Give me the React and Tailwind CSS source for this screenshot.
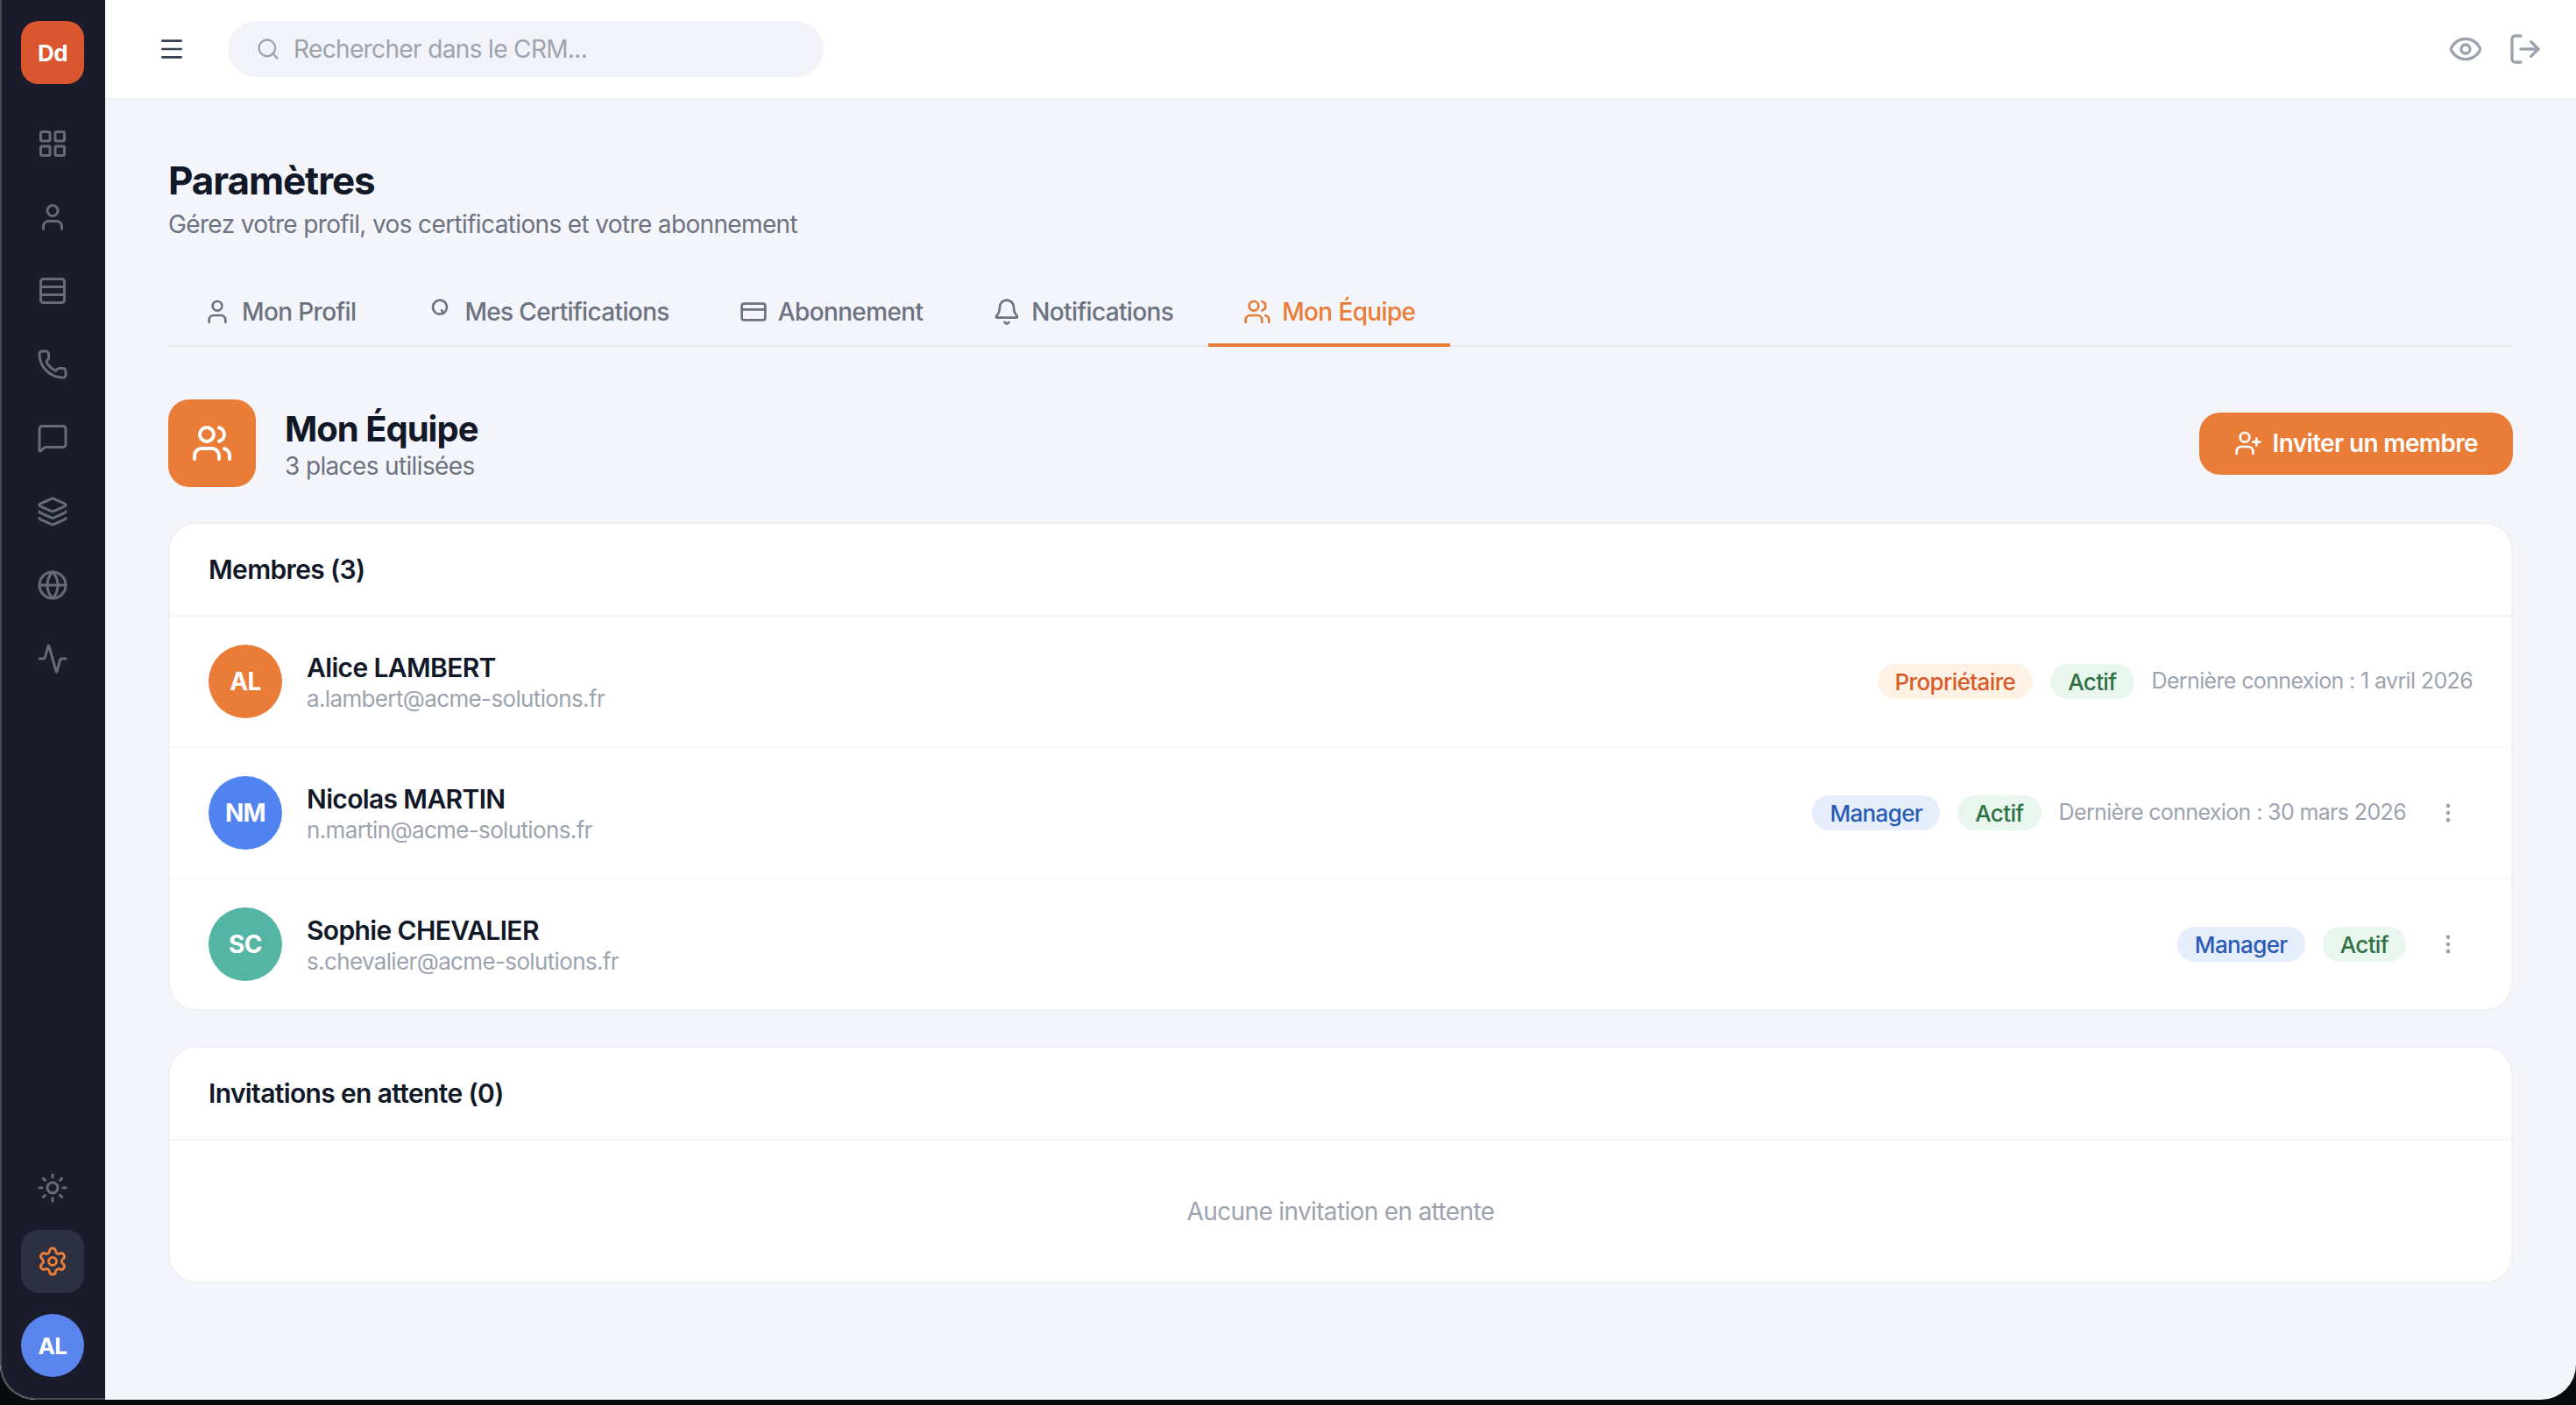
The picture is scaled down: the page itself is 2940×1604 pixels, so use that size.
import { Activity, Bell, CreditCard, Eye, Globe, Layers, LayoutGrid, LogOut, Menu, MessageSquare, MoreVertical, Phone, Rows3, Search, Settings, Sun, User, UserPlus, Users } from "lucide-react"

const navIcons = [LayoutGrid, User, Rows3, Phone, MessageSquare, Layers, Globe, Activity]

const AwardRing = ({ size }) => (
    <svg width={size} height={size} viewBox="0 0 24 24" fill="none" stroke="currentColor" strokeWidth="2" strokeLinecap="round" strokeLinejoin="round">
        <circle cx="12" cy="8" r="6" />
        <path d="M15 13.2 13.6 10.8" />
    </svg>
)

const tabs = [
    { label: "Mon Profil", icon: User },
    { label: "Mes Certifications", icon: AwardRing },
    { label: "Abonnement", icon: CreditCard },
    { label: "Notifications", icon: Bell },
    { label: "Mon Équipe", icon: Users, active: true },
]

const members = [
    { initials: "AL", name: "Alice LAMBERT", email: "a.lambert@acme-solutions.fr", color: "bg-[#e97c37]", role: "Propriétaire", roleClass: "bg-[#fdf2e3] text-[#d65a2a]", lastLogin: "Dernière connexion : 1 avril 2026" },
    { initials: "NM", name: "Nicolas MARTIN", email: "n.martin@acme-solutions.fr", color: "bg-[#5083f0]", role: "Manager", roleClass: "bg-[#e6eefc] text-[#2a5bb5]", lastLogin: "Dernière connexion : 30 mars 2026", menu: true },
    { initials: "SC", name: "Sophie CHEVALIER", email: "s.chevalier@acme-solutions.fr", color: "bg-[#55b5a4]", role: "Manager", roleClass: "bg-[#e6eefc] text-[#2a5bb5]", menu: true },
]

const Badge = ({ className, children }) => (
    <span className={`flex h-10 items-center rounded-full px-5 text-[26px] font-medium ${className}`}>{children}</span>
)

const Sidebar = () => (
    <aside className="flex h-full w-[120px] shrink-0 flex-col items-center rounded-bl-[40px] border-b-2 border-l-2 border-[#4b4c58] bg-[#1a1c2b] pt-6 pb-6 pr-[2px]">
        <div className="flex h-[72px] w-[72px] items-center justify-center rounded-[20px] bg-[#d9562f] text-[26px] font-bold text-white">Dd</div>
        <nav className="mt-8 flex flex-col gap-3">
            {navIcons.map((Icon, i) => (
                <button key={i} className="flex h-[72px] w-[72px] items-center justify-center text-[#666b78]">
                    <Icon size={36} />
                </button>
            ))}
        </nav>
        <div className="mt-auto flex flex-col gap-3">
            <button className="flex h-[72px] w-[72px] items-center justify-center text-[#666b78]">
                <Sun size={36} />
            </button>
            <button className="flex h-[72px] w-[72px] items-center justify-center rounded-[20px] bg-[#2d2f43] text-[#e97c37]">
                <Settings size={36} />
            </button>
            <div className="mt-3 flex h-[72px] w-[72px] items-center justify-center rounded-full bg-[#5a85ee] text-[26px] font-bold text-white">AL</div>
        </div>
    </aside>
)

const Topbar = () => (
    <header className="flex h-[114px] shrink-0 items-center border-b-2 border-[#eff0f5] bg-white pl-[60px] pr-[38px]">
        <button className="text-[#374151]">
            <Menu size={32} />
        </button>
        <div className="ml-12 flex h-16 w-[680px] items-center gap-[15px] rounded-full bg-[#f2f3f8] pl-8 text-[28px] text-[#9ca3af]">
            <Search size={28} />
            <span>Rechercher dans le CRM...</span>
        </div>
        <div className="ml-auto flex items-center gap-7 text-[#9ca3af]">
            <Eye size={40} />
            <LogOut size={40} />
        </div>
    </header>
)

const MemberRow = ({ member, last }) => (
    <div className={`flex items-center py-8 pr-11 pl-11 ${last ? "" : "border-b-2 border-[#f8f8fa]"}`}>
        <div className={`flex h-[84px] w-[84px] items-center justify-center rounded-full text-[28px] font-bold text-white ${member.color}`}>{member.initials}</div>
        <div className="ml-7">
            <p className="text-[30px] leading-[40px] font-semibold text-[#111827]">{member.name}</p>
            <p className="text-[26px] leading-[32px] text-[#9ca3af]">{member.email}</p>
        </div>
        <div className="ml-auto flex items-center gap-5">
            <Badge className={member.roleClass}>{member.role}</Badge>
            <Badge className="bg-[#e8f6ee] text-[#2f7045]">Actif</Badge>
            {member.lastLogin && <span className="text-[25px] text-[#9ca3af]">{member.lastLogin}</span>}
            {member.menu && (
                <button className="flex h-14 w-14 items-center justify-center text-[#9ca3af]">
                    <MoreVertical size={28} />
                </button>
            )}
        </div>
    </div>
)

const App = () => {
    return (
        <div className="h-[1604px] w-[2940px] overflow-hidden bg-[#080a0e] font-['Inter',sans-serif] tracking-[-0.04em] antialiased">
            <div className="flex h-[1598px] overflow-hidden rounded-b-[40px] bg-[#f4f5fa]">
                <Sidebar />
                <div className="flex min-w-0 flex-1 flex-col">
                    <Topbar />
                    <main className="flex-1 px-[72px] pt-16">
                        <h1 className="text-[44px] leading-[56px] font-bold tracking-tight text-[#111827]">Paramètres</h1>
                        <p className="mt-0.5 text-[28px] leading-[40px] text-[#6b7280]">Gérez votre profil, vos certifications et votre abonnement</p>

                        <div className="mt-10 flex h-20 border-b-2 border-[#e5e7eb]">
                            {tabs.map(({ label, icon: Icon, active }) => (
                                <button
                                    key={label}
                                    className={`-mb-0.5 flex items-center gap-3 border-b-4 px-10 pt-1 text-[28px] font-medium ${active ? "border-[#e97c37] text-[#e97c37]" : "border-transparent text-[#6b7280]"}`}
                                >
                                    <Icon size={32} />
                                    {label}
                                </button>
                            ))}
                        </div>

                        <div className="mt-[60px] flex items-center">
                            <div className="flex h-[100px] w-[100px] items-center justify-center rounded-3xl bg-[#e97c37] text-white">
                                <Users size={48} />
                            </div>
                            <div className="ml-[33px]">
                                <h2 className="pt-1 text-[40px] leading-[48px] font-bold tracking-tight text-[#111827]">Mon Équipe</h2>
                                <p className="text-[28px] leading-[36px] text-[#6b7280]">3 places utilisées</p>
                            </div>
                            <button className="ml-auto flex h-[71px] items-center gap-3 rounded-3xl bg-[#e97c37] px-10 text-[28px] font-semibold text-white">
                                <UserPlus size={32} />
                                Inviter un membre
                            </button>
                        </div>

                        <section className="mt-10 overflow-hidden rounded-[32px] border-2 border-[#eef0f4] bg-white">
                            <div className="flex h-[106px] items-center border-b-2 border-[#f4f5f7] px-11 text-[30px] font-semibold text-[#111827]">Membres (3)</div>
                            {members.map((member, i) => (
                                <MemberRow key={member.initials} member={member} last={i === members.length - 1} />
                            ))}
                        </section>

                        <section className="mt-10 overflow-hidden rounded-[32px] border-2 border-[#eef0f4] bg-white">
                            <div className="flex h-[106px] items-center border-b-2 border-[#f4f5f7] px-11 text-[30px] font-semibold text-[#111827]">Invitations en attente (0)</div>
                            <div className="flex h-[161px] items-center justify-center text-[28px] text-[#9ca3af]">Aucune invitation en attente</div>
                        </section>
                    </main>
                </div>
            </div>
        </div>
    )
}
export default App
